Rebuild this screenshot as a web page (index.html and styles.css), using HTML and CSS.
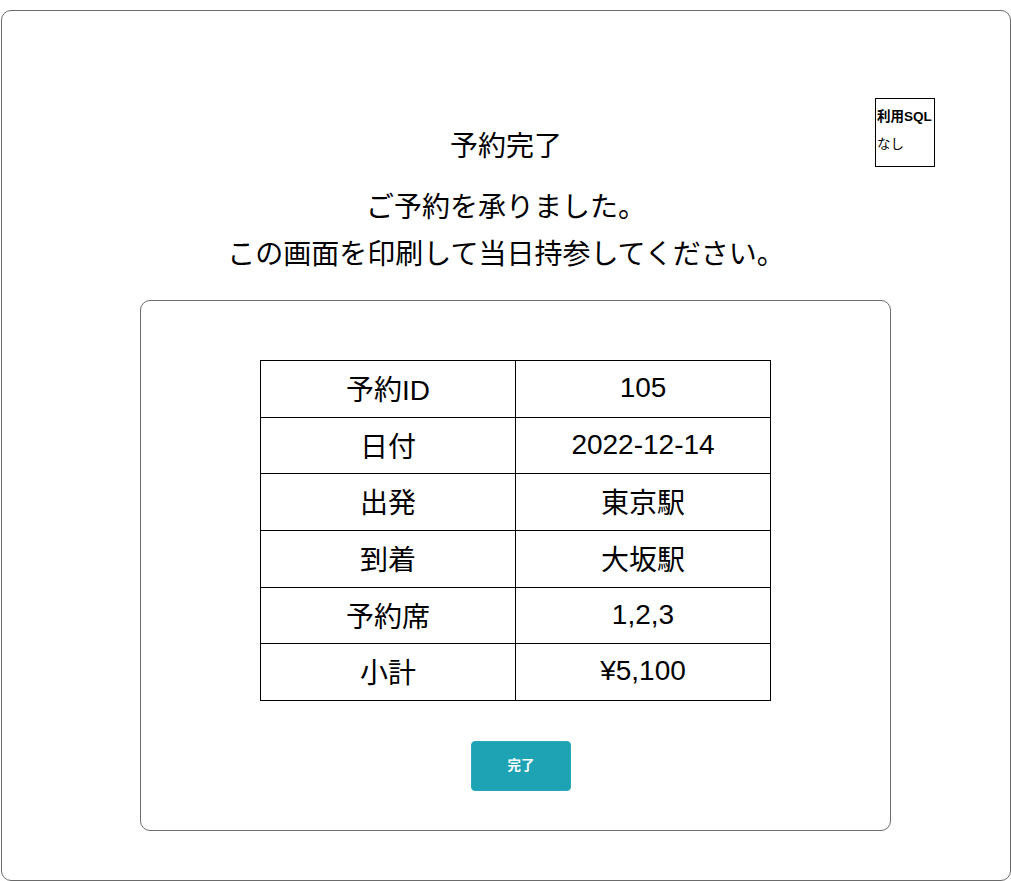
FILE: index.html
```html
<!DOCTYPE html>
<html lang="ja">
<head>
<meta charset="utf-8">
<title>予約完了</title>
<link rel="stylesheet" href="styles.css">
</head>
<body>
<div class="frame">
  <div class="sql-box">
    <div class="sql-title">利用SQL</div>
    <div class="sql-body">なし</div>
  </div>
  <h1 class="title">予約完了</h1>
  <p class="message">ご予約を承りました。<br>この画面を印刷して当日持参してください。</p>
  <div class="card">
    <table class="summary">
      <tr><td>予約ID</td><td>105</td></tr>
      <tr><td>日付</td><td>2022-12-14</td></tr>
      <tr><td>出発</td><td>東京駅</td></tr>
      <tr><td>到着</td><td>大坂駅</td></tr>
      <tr><td>予約席</td><td>1,2,3</td></tr>
      <tr><td>小計</td><td>¥5,100</td></tr>
    </table>
    <div class="actions">
      <button class="btn-done" type="button">完了</button>
    </div>
  </div>
</div>
</body>
</html>
```

FILE: styles.css
```css
html, body {
  margin: 0;
  padding: 0;
  background: #fff;
}

body {
  font-family: "Liberation Sans", "Noto Sans CJK JP", sans-serif;
  color: #000;
}

.frame {
  position: relative;
  box-sizing: border-box;
  width: 1010px;
  height: 871px;
  margin: 10px 0 0 1px;
  border: 1px solid #6b6b6b;
  border-radius: 10px;
  padding-top: 116px;
}

.sql-box {
  position: absolute;
  top: 87px;
  left: 873px;
  box-sizing: border-box;
  width: 60px;
  height: 69px;
  border: 1px solid #000;
  padding: 10px 0 0 1px;
  font-size: 13.5px;
  white-space: nowrap;
}

.sql-title {
  font-weight: bold;
  line-height: 16px;
}

.sql-body {
  margin-top: 12px;
  line-height: 16px;
}

.title {
  margin: 0;
  font-size: 28px;
  font-weight: normal;
  line-height: 40px;
  text-align: center;
}

.message {
  margin: 17px 0 0;
  font-size: 28px;
  line-height: 47px;
  text-align: center;
}

.card {
  box-sizing: border-box;
  width: 751px;
  height: 531px;
  margin: 22px 0 0 138px;
  border: 1px solid #6b6b6b;
  border-radius: 10px;
  padding-top: 59px;
}

.summary {
  width: 511px;
  margin: 0 auto;
  border-collapse: collapse;
  font-size: 28px;
}

.summary td {
  box-sizing: border-box;
  width: 50%;
  height: 56.7px;
  padding: 0 0 2px;
  border: 1px solid #000;
  text-align: center;
  vertical-align: middle;
}

.actions {
  display: flex;
  justify-content: center;
  margin-top: 40px;
  padding-left: 11px;
}

.btn-done {
  width: 100px;
  height: 50px;
  padding: 0 0 4px;
  border: 1px solid #2aa9bb;
  border-radius: 4px;
  background: #1ea3b5;
  color: #fff;
  font-family: "Liberation Sans", "Noto Sans CJK JP", sans-serif;
  font-size: 13.5px;
  font-weight: bold;
  cursor: pointer;
}
```
